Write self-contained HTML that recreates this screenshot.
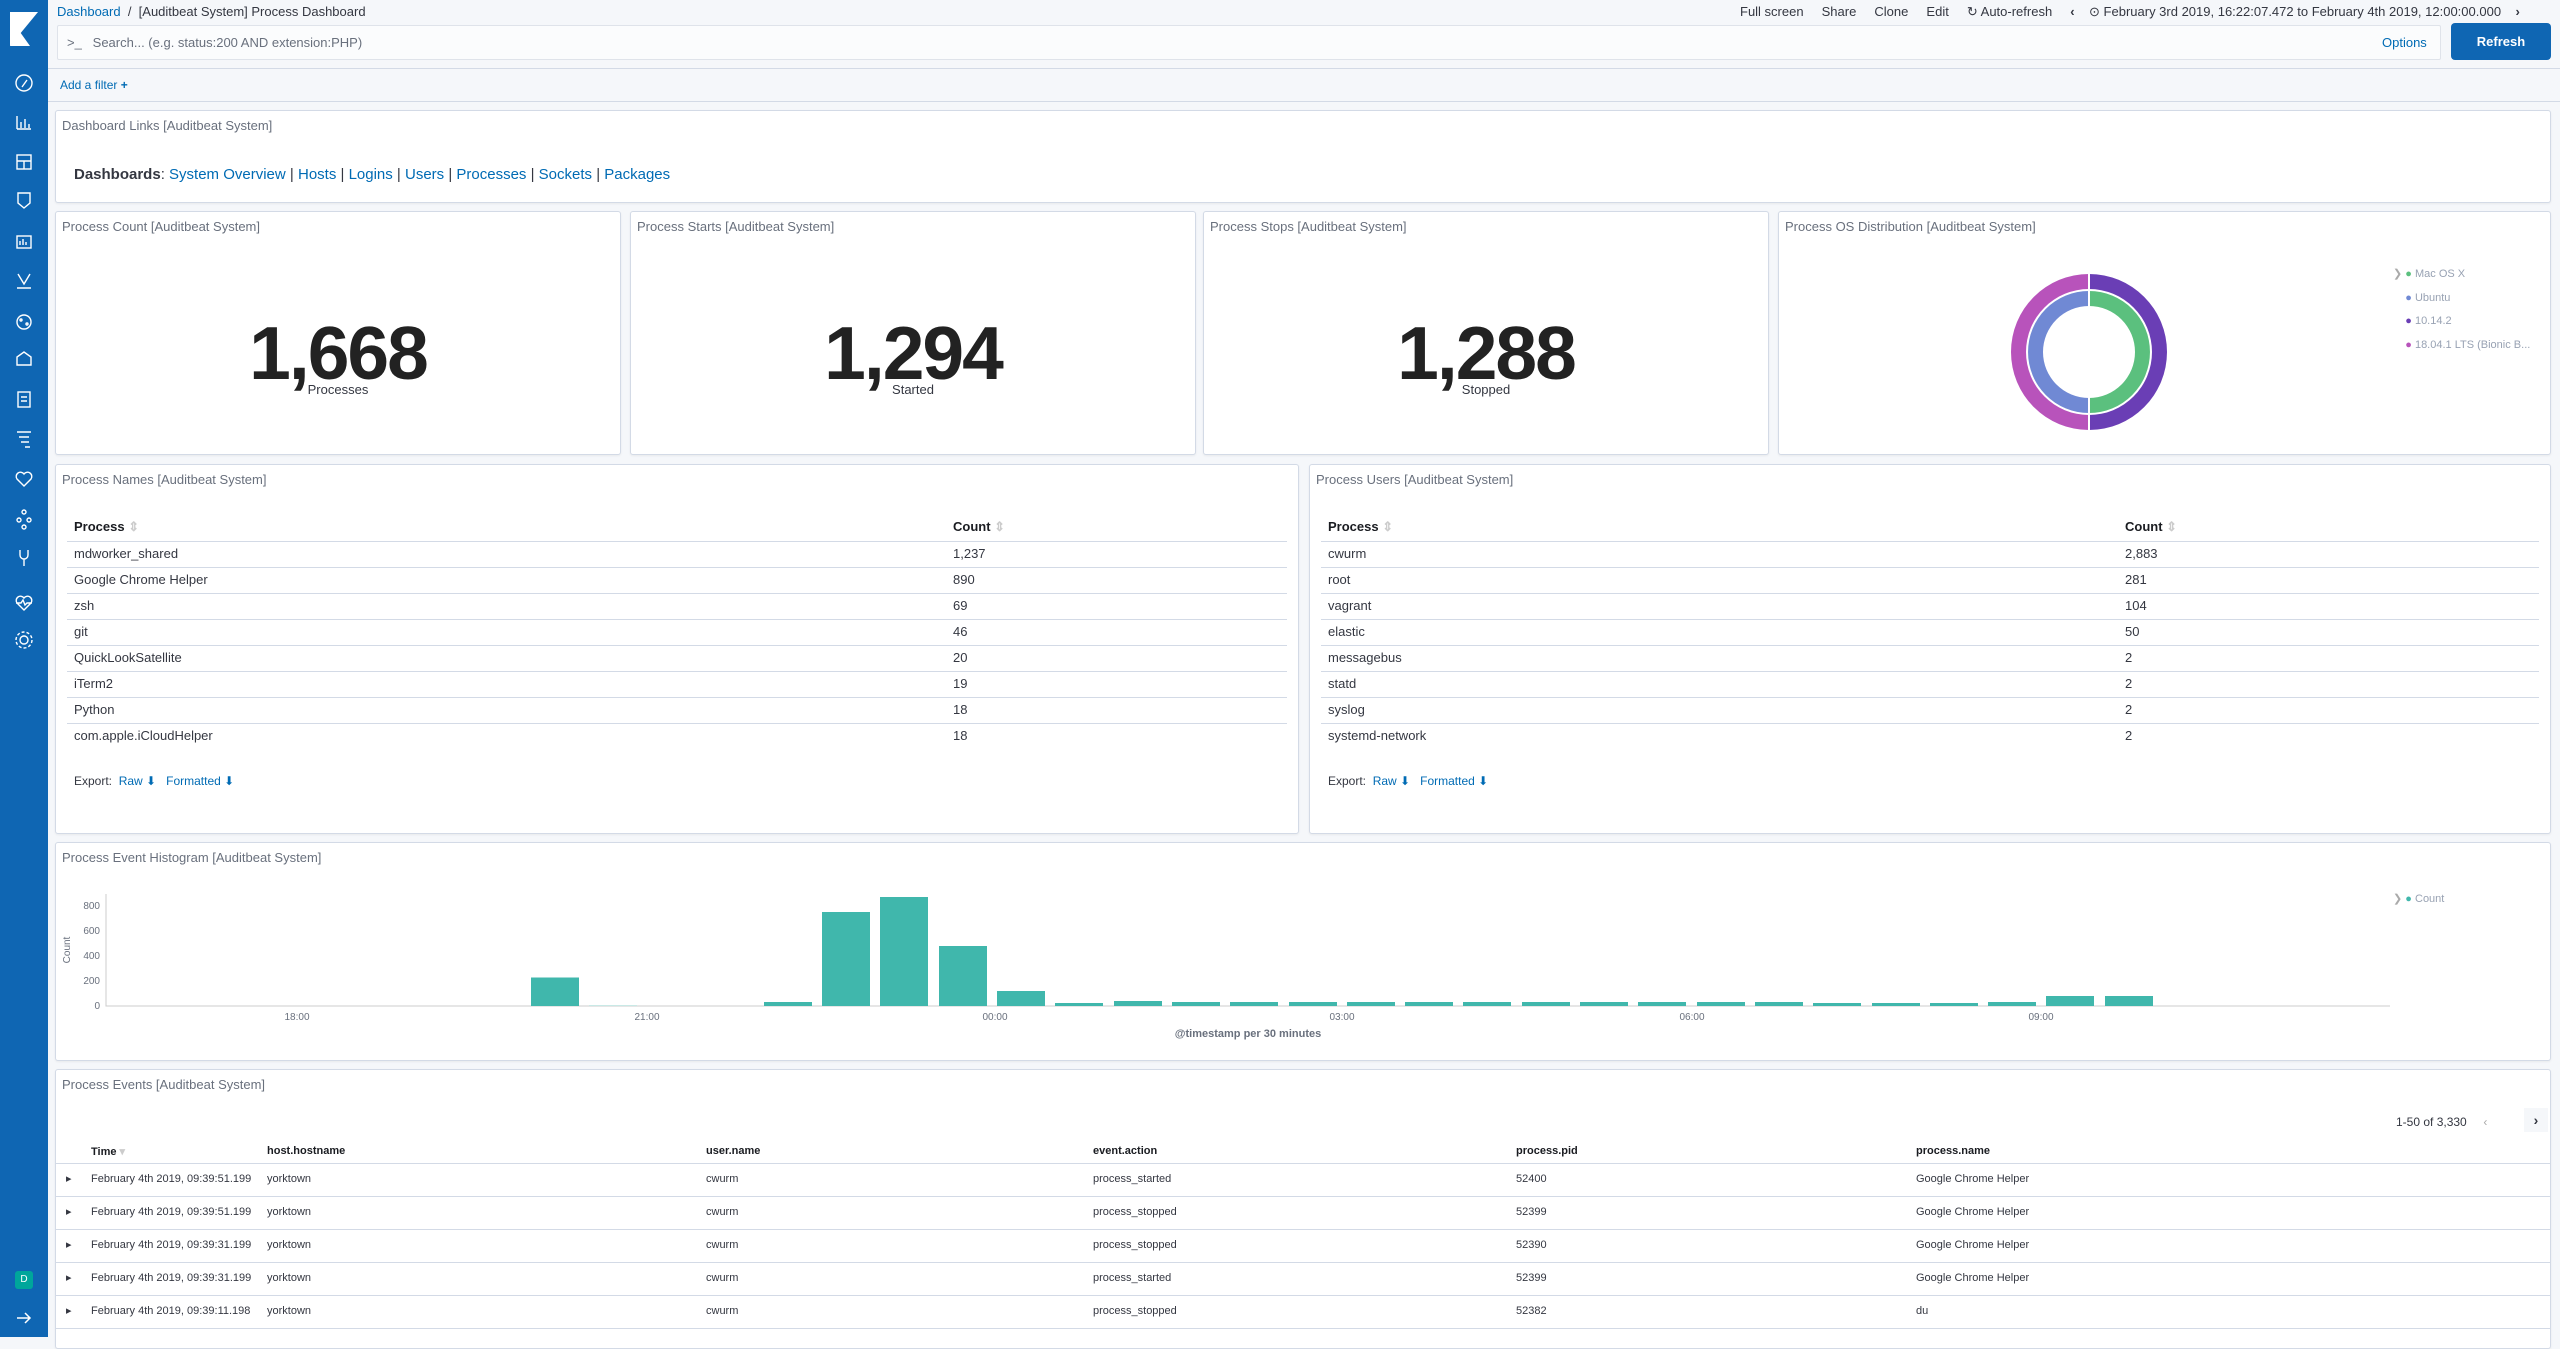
<!DOCTYPE html>
<html><head><meta charset="utf-8"><style>
*{box-sizing:border-box;margin:0;padding:0}
body{width:2560px;height:1337px;overflow:hidden;background:#f5f7fa;font-family:"Liberation Sans",sans-serif;color:#343741;position:relative;font-size:13px}
.a{position:absolute;white-space:nowrap}
.side{position:absolute;left:0;top:0;width:48px;height:1337px;background:#0f66b3}
.p{position:absolute;background:#fff;border:1px solid #d3dae6;border-radius:3px;box-shadow:0 1px 2px rgba(0,0,0,.06)}
.t{position:absolute;left:6px;top:7px;font-size:13px;color:#69707d}
.lnk{color:#006bb4}
.big{position:absolute;left:0;right:0;text-align:center;font-weight:bold;font-size:75px;color:#222;top:98px;letter-spacing:-2px}
.sub{position:absolute;left:0;right:0;text-align:center;font-size:13px;color:#343741;top:170px}
.row{position:absolute;left:11px;right:11px;height:26px;border-top:1px solid #d3dae6}
.hd{font-weight:bold;color:#1a1c21}
</style></head><body>
<div class="side">
<svg class="a" style="left:10px;top:12px" width="28" height="34" viewBox="0 0 28 34"><path d="M0 0h28L0 34z" fill="#fff"/><path d="M0 34l10-14 10 14z" fill="#fff"/></svg>
<svg width="48" height="700" class="a" style="left:0;top:70px" fill="none" stroke="#fff" stroke-width="1.4">
<circle cx="24" cy="13" r="8"/><path d="M27 10l-5 7"/>
<path d="M17 59v-13M17 59h14M21 58v-6M25 58v-9M29 58v-4"/>
<rect x="17" y="85" width="14" height="14"/><path d="M17 91h14M24 91v8"/>
<path d="M18 123h12v10l-6 5-6-5z"/>
<rect x="17" y="166" width="14" height="12"/><path d="M20 175v-4M23 175v-6M26 175v-3"/>
<path d="M18 204l6 10 6-10M17 218h14"/>
<circle cx="24" cy="252" r="7"/><circle cx="21" cy="250" r="1"/><circle cx="27" cy="254" r="1"/>
<path d="M17 295h14v-8l-7-5-7 5z"/>
<rect x="18" y="322" width="12" height="15"/><path d="M21 327h6M21 331h6"/>
<path d="M17 362h14M19 367h10M21 372h8M25 377h5"/>
<path d="M24 416l-7-7a4 4 0 0 1 7-5 4 4 0 0 1 7 5z"/>
<circle cx="24" cy="442" r="2"/><circle cx="19" cy="450" r="2"/><circle cx="29" cy="450" r="2"/><circle cx="24" cy="457" r="2"/>
<path d="M20 480v5a4 4 0 0 0 8 0v-5M24 489v7"/>
<path d="M24 540l-7-7a4 4 0 0 1 7-5 4 4 0 0 1 7 5zM16 533h5l2-3 2 5 2-2h5"/>
<circle cx="24" cy="570" r="4"/><circle cx="24" cy="570" r="8" stroke-dasharray="3 2"/>
</svg>
<div class="a" style="left:15px;top:1271px;width:18px;height:18px;background:#00a69b;border-radius:3px;color:#fff;font-size:10px;text-align:center;line-height:18px">D</div>
<svg class="a" style="left:15px;top:1309px" width="18" height="18" fill="none" stroke="#fff" stroke-width="1.5"><path d="M2 9h13M10 4l5 5-5 5"/></svg>
</div>

<div class="a" style="left:57px;top:4px;font-size:13px"><span class="lnk">Dashboard</span> &nbsp;/&nbsp; [Auditbeat System] Process Dashboard</div>
<div class="a" style="left:1740px;top:4px;font-size:13px">Full screen &nbsp;&nbsp;&nbsp; Share &nbsp;&nbsp;&nbsp; Clone &nbsp;&nbsp;&nbsp; Edit &nbsp;&nbsp;&nbsp; ↻ Auto-refresh &nbsp;&nbsp;&nbsp; <b>‹</b> &nbsp;&nbsp; ⊙ February 3rd 2019, 16:22:07.472 to February 4th 2019, 12:00:00.000 &nbsp;&nbsp; <b>›</b></div>
<div class="a" style="left:57px;top:25px;width:2384px;height:35px;background:#fbfcfd;border:1px solid #dfe3ea;border-radius:2px"></div>
<div class="a" style="left:67px;top:35px;font-size:13px;color:#69707d">&gt;_ &nbsp; Search... (e.g. status:200 AND extension:PHP)</div>
<div class="a lnk" style="left:2382px;top:35px;font-size:13px">Options</div>
<div class="a" style="left:2451px;top:23px;width:100px;height:37px;background:#0f66b3;border-radius:4px;color:#fff;font-weight:bold;text-align:center;line-height:37px;font-size:13px">Refresh</div>
<div class="a" style="left:48px;top:68px;width:2512px;height:1px;background:#d3dae6"></div>
<div class="a lnk" style="left:60px;top:78px;font-size:12px">Add a filter <b>+</b></div>
<div class="a" style="left:48px;top:101px;width:2512px;height:1px;background:#d3dae6"></div>

<div class="p" style="left:55px;top:110px;width:2496px;height:93px"><div class="t">Dashboard Links [Auditbeat System]</div>
<div class="a" style="left:18px;top:55px;font-size:15px"><b>Dashboards</b>: <span class="lnk">System Overview</span> | <span class="lnk">Hosts</span> | <span class="lnk">Logins</span> | <span class="lnk">Users</span> | <span class="lnk">Processes</span> | <span class="lnk">Sockets</span> | <span class="lnk">Packages</span></div></div>

<div class="p" style="left:55px;top:211px;width:566px;height:244px"><div class="t">Process Count [Auditbeat System]</div><div class="big">1,668</div><div class="sub">Processes</div></div>
<div class="p" style="left:630px;top:211px;width:566px;height:244px"><div class="t">Process Starts [Auditbeat System]</div><div class="big">1,294</div><div class="sub">Started</div></div>
<div class="p" style="left:1203px;top:211px;width:566px;height:244px"><div class="t">Process Stops [Auditbeat System]</div><div class="big">1,288</div><div class="sub">Stopped</div></div>
<div class="p" style="left:1778px;top:211px;width:773px;height:244px"><div class="t">Process OS Distribution [Auditbeat System]</div>
<svg class="a" style="left:230px;top:60px" width="160" height="160" viewBox="-80 -80 160 160">
<path d="M0 -78A78 78 0 0 1 0 78L0 63A63 63 0 0 0 0 -63z" fill="#6a3eb5"/>
<path d="M0 78A78 78 0 0 1 0 -78L0 -63A63 63 0 0 0 0 63z" fill="#b853bb"/>
<path d="M0 -61A61 61 0 0 1 0 61L0 46A46 46 0 0 0 0 -46z" fill="#5bc07e"/>
<path d="M0 61A61 61 0 0 1 0 -61L0 -46A46 46 0 0 0 0 46z" fill="#7089d4"/>
<path d="M0 -80V80" stroke="#fff" stroke-width="2"/></svg>
<div class="a" style="left:614px;top:51px;font-size:11px;color:#98a2b3;line-height:23.5px"><span style="color:#aaa">❯</span> <span style="color:#5bc07e">●</span> Mac OS X<br>&nbsp;&nbsp;&nbsp;&nbsp;<span style="color:#7089d4">●</span> Ubuntu<br>&nbsp;&nbsp;&nbsp;&nbsp;<span style="color:#6a3eb5">●</span> 10.14.2<br>&nbsp;&nbsp;&nbsp;&nbsp;<span style="color:#b853bb">●</span> 18.04.1 LTS (Bionic B...</div></div>

<div class="p" style="left:55px;top:464px;width:1244px;height:370px"><div class="t">Process Names [Auditbeat System]</div>
<div class="a hd" style="left:18px;top:54px">Process <span style="color:#ccc">⇕</span></div><div class="a hd" style="left:897px;top:54px">Count <span style="color:#ccc">⇕</span></div>
<div class="row" style="top:76px"></div><div class="a" style="left:18px;top:81px">mdworker_shared</div><div class="a" style="left:897px;top:81px">1,237</div>
<div class="row" style="top:102px"></div><div class="a" style="left:18px;top:107px">Google Chrome Helper</div><div class="a" style="left:897px;top:107px">890</div>
<div class="row" style="top:128px"></div><div class="a" style="left:18px;top:133px">zsh</div><div class="a" style="left:897px;top:133px">69</div>
<div class="row" style="top:154px"></div><div class="a" style="left:18px;top:159px">git</div><div class="a" style="left:897px;top:159px">46</div>
<div class="row" style="top:180px"></div><div class="a" style="left:18px;top:185px">QuickLookSatellite</div><div class="a" style="left:897px;top:185px">20</div>
<div class="row" style="top:206px"></div><div class="a" style="left:18px;top:211px">iTerm2</div><div class="a" style="left:897px;top:211px">19</div>
<div class="row" style="top:232px"></div><div class="a" style="left:18px;top:237px">Python</div><div class="a" style="left:897px;top:237px">18</div>
<div class="row" style="top:258px"></div><div class="a" style="left:18px;top:263px">com.apple.iCloudHelper</div><div class="a" style="left:897px;top:263px">18</div>
<div class="a" style="left:18px;top:309px;font-size:12px">Export: &nbsp;<span class="lnk">Raw ⬇</span> &nbsp; <span class="lnk">Formatted ⬇</span></div></div>

<div class="p" style="left:1309px;top:464px;width:1242px;height:370px"><div class="t">Process Users [Auditbeat System]</div>
<div class="a hd" style="left:18px;top:54px">Process <span style="color:#ccc">⇕</span></div><div class="a hd" style="left:815px;top:54px">Count <span style="color:#ccc">⇕</span></div>
<div class="row" style="top:76px"></div><div class="a" style="left:18px;top:81px">cwurm</div><div class="a" style="left:815px;top:81px">2,883</div>
<div class="row" style="top:102px"></div><div class="a" style="left:18px;top:107px">root</div><div class="a" style="left:815px;top:107px">281</div>
<div class="row" style="top:128px"></div><div class="a" style="left:18px;top:133px">vagrant</div><div class="a" style="left:815px;top:133px">104</div>
<div class="row" style="top:154px"></div><div class="a" style="left:18px;top:159px">elastic</div><div class="a" style="left:815px;top:159px">50</div>
<div class="row" style="top:180px"></div><div class="a" style="left:18px;top:185px">messagebus</div><div class="a" style="left:815px;top:185px">2</div>
<div class="row" style="top:206px"></div><div class="a" style="left:18px;top:211px">statd</div><div class="a" style="left:815px;top:211px">2</div>
<div class="row" style="top:232px"></div><div class="a" style="left:18px;top:237px">syslog</div><div class="a" style="left:815px;top:237px">2</div>
<div class="row" style="top:258px"></div><div class="a" style="left:18px;top:263px">systemd-network</div><div class="a" style="left:815px;top:263px">2</div>
<div class="a" style="left:18px;top:309px;font-size:12px">Export: &nbsp;<span class="lnk">Raw ⬇</span> &nbsp; <span class="lnk">Formatted ⬇</span></div></div>

<div class="p" style="left:55px;top:842px;width:2496px;height:219px"><div class="t">Process Event Histogram [Auditbeat System]</div>
<div class="a" style="left:2337px;top:49px;font-size:11px;color:#98a2b3"><span style="color:#aaa">❯</span> <span style="color:#40b7ac">●</span> Count</div></div>
<svg class="a" style="left:0;top:840px" width="2400" height="220" font-family="Liberation Sans" font-size="10" fill="#69707d">
<path d="M106 54V166H2390" stroke="#ccc" fill="none"/>
<text x="100" y="69" text-anchor="end">800</text><text x="100" y="94" text-anchor="end">600</text><text x="100" y="119" text-anchor="end">400</text><text x="100" y="144" text-anchor="end">200</text><text x="100" y="169" text-anchor="end">0</text>
<text x="70" y="110" transform="rotate(-90 70 110)" text-anchor="middle">Count</text>
<g fill="#40b7ac">
<rect x="531" y="137.5" width="48" height="28.5"/><rect x="589" y="165" width="48" height="1" fill="#c9e9e6"/>
<rect x="764" y="162" width="48" height="4"/><rect x="822" y="72" width="48" height="94"/><rect x="880" y="57" width="48" height="109"/><rect x="939" y="106" width="48" height="60"/>
<rect x="997" y="151" width="48" height="15"/><rect x="1055" y="163" width="48" height="3"/><rect x="1114" y="161" width="48" height="5"/><rect x="1172" y="162" width="48" height="4"/><rect x="1230" y="162" width="48" height="4"/><rect x="1289" y="162" width="48" height="4"/><rect x="1347" y="162" width="48" height="4"/><rect x="1405" y="162" width="48" height="4"/><rect x="1463" y="162" width="48" height="4"/><rect x="1522" y="162" width="48" height="4"/><rect x="1580" y="162" width="48" height="4"/><rect x="1638" y="162" width="48" height="4"/><rect x="1697" y="162" width="48" height="4"/><rect x="1755" y="162" width="48" height="4"/><rect x="1813" y="163" width="48" height="3"/><rect x="1872" y="163" width="48" height="3"/><rect x="1930" y="163" width="48" height="3"/><rect x="1988" y="162" width="48" height="4"/><rect x="2046" y="156" width="48" height="10"/><rect x="2105" y="156" width="48" height="10"/>
</g>
<text x="297" y="180" text-anchor="middle">18:00</text><text x="647" y="180" text-anchor="middle">21:00</text><text x="995" y="180" text-anchor="middle">00:00</text><text x="1342" y="180" text-anchor="middle">03:00</text><text x="1692" y="180" text-anchor="middle">06:00</text><text x="2041" y="180" text-anchor="middle">09:00</text>
<text x="1248" y="197" text-anchor="middle" font-weight="bold" font-size="11">@timestamp per 30 minutes</text>
</svg>

<div class="p" style="left:55px;top:1069px;width:2496px;height:280px;font-size:11px"><div class="t">Process Events [Auditbeat System]</div>
<div class="a" style="left:2340px;top:45px;font-size:12px">1-50 of 3,330 &nbsp;&nbsp;&nbsp; <span style="color:#aaa">‹</span></div>
<div class="a" style="left:2468px;top:38px;width:24px;height:24px;background:#f5f7fa;text-align:center;line-height:24px;font-weight:bold;font-size:14px">›</div>
<div class="a hd" style="left:35px;top:75px">Time <span style="color:#ccc">▾</span></div><div class="a hd" style="left:211px;top:75px">host.hostname</div><div class="a hd" style="left:650px;top:75px">user.name</div><div class="a hd" style="left:1037px;top:75px">event.action</div><div class="a hd" style="left:1460px;top:75px">process.pid</div><div class="a hd" style="left:1860px;top:75px">process.name</div>
<div class="a" style="left:0;right:0;top:93px;border-top:1px solid #d3dae6"></div>
<div class="a" style="left:10px;top:93px;line-height:33px;font-size:11px">▸<br>▸<br>▸<br>▸<br>▸</div>
<div class="a" style="left:35px;top:93px;line-height:33px">February 4th 2019, 09:39:51.199<br>February 4th 2019, 09:39:51.199<br>February 4th 2019, 09:39:31.199<br>February 4th 2019, 09:39:31.199<br>February 4th 2019, 09:39:11.198</div>
<div class="a" style="left:211px;top:93px;line-height:33px">yorktown<br>yorktown<br>yorktown<br>yorktown<br>yorktown</div>
<div class="a" style="left:650px;top:93px;line-height:33px">cwurm<br>cwurm<br>cwurm<br>cwurm<br>cwurm</div>
<div class="a" style="left:1037px;top:93px;line-height:33px">process_started<br>process_stopped<br>process_stopped<br>process_started<br>process_stopped</div>
<div class="a" style="left:1460px;top:93px;line-height:33px">52400<br>52399<br>52390<br>52399<br>52382</div>
<div class="a" style="left:1860px;top:93px;line-height:33px">Google Chrome Helper<br>Google Chrome Helper<br>Google Chrome Helper<br>Google Chrome Helper<br>du</div>
<div class="a" style="left:0;right:0;top:126px;border-top:1px solid #d3dae6"></div>
<div class="a" style="left:0;right:0;top:159px;border-top:1px solid #d3dae6"></div>
<div class="a" style="left:0;right:0;top:192px;border-top:1px solid #d3dae6"></div>
<div class="a" style="left:0;right:0;top:225px;border-top:1px solid #d3dae6"></div>
<div class="a" style="left:0;right:0;top:258px;border-top:1px solid #d3dae6"></div>
</div>
</body></html>
